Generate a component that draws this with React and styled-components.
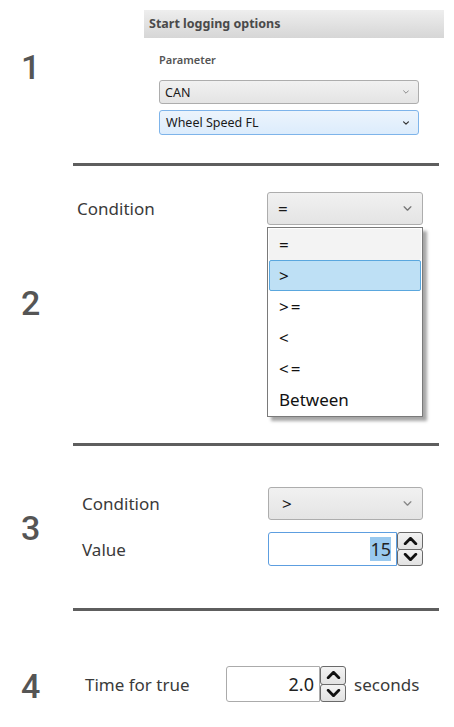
import React from 'react';
import styled, { createGlobalStyle } from 'styled-components';

const GlobalStyle = createGlobalStyle`
  body {
    margin: 0;
    background: #fff;
    font-family: 'Noto Sans', 'Open Sans', sans-serif;
    color: #333;
  }
`;

const Chevron = ({ dir = 'down', w = 8, h = 5, color = '#666', weight = 1.4 }) => (
	<svg width={w} height={h} viewBox="0 0 10 6">
		<polyline
			points={dir === 'down' ? '1,1 5,5 9,1' : '1,5 5,1 9,5'}
			fill="none"
			stroke={color}
			strokeWidth={weight}
			strokeLinecap="round"
			strokeLinejoin="round"
		/>
	</svg>
);

const Spinner = ({ h }) => (
	<SpinStack $h={h}>
		<SpinBtn><Chevron dir="up" w={15} h={8} color="#111" weight={2.1} /></SpinBtn>
		<SpinBtn><Chevron w={15} h={8} color="#111" weight={2.1} /></SpinBtn>
	</SpinStack>
);

const App = () => {
	const options = ['=', '>', '>=', '<', '<=', 'Between'];

	return (
		<Page>
			<GlobalStyle />

			<Section $h={163}>
				<Step $top={50}>1</Step>
				<Body $top={10}>
					<Header>Start logging options</Header>
					<ParamBlock>
						<SmallLabel>Parameter</SmallLabel>
						<Combo $w={260} $h={24} $pl={5} $pr={9} $fs={12.5}>
							CAN
							<Chevron w={6} h={4} color="#888" weight={1.6} />
						</Combo>
						<Combo $w={260} $h={25} $pl={6} $pr={9} $fs={12.5} $active>
							Wheel Speed FL
							<Chevron w={6} h={4} color="#333" weight={2} />
						</Combo>
					</ParamBlock>
				</Body>
			</Section>
			<Divider />

			<Section $h={277}>
				<Step $top={120}>2</Step>
				<Body $top={26}>
					<Field $indent={4}>
						<Label $w={190}>Condition</Label>
						<ComboWrap>
							<Combo $w={156} $h={33} $pl={10} $pr={10} $fs={17}>
								<Symbol>=</Symbol>
								<Chevron w={9} h={5} color="#777" weight={1.6} />
							</Combo>
							<Menu>
								{options.map((o, i) => (
									<Option key={o} $hl={i === 1} $current={i === 0}>
										{o.length < 3 ? <Symbol>{o}</Symbol> : o}
									</Option>
								))}
							</Menu>
						</ComboWrap>
					</Field>
				</Body>
			</Section>
			<Divider />

			<Section $h={162}>
				<Step $top={65}>3</Step>
				<Body $top={41}>
					<Fields>
						<Field $indent={9}>
							<Label $w={186}>Condition</Label>
							<Combo $w={155} $h={33} $pl={13} $pr={10} $fs={17}>
								<Symbol>&gt;</Symbol>
								<Chevron w={9} h={5} color="#888" weight={1.6} />
							</Combo>
						</Field>
						<Field $indent={9}>
							<Label $w={186}>Value</Label>
							<Spin>
								<NumBox $w={129} $h={34} $focus>
									<Selected>15</Selected>
								</NumBox>
								<Spinner h={34} />
							</Spin>
						</Field>
					</Fields>
				</Body>
			</Section>
			<Divider />

			<Section $h={116}>
				<Step $top={58}>4</Step>
				<Body $top={55}>
					<Field $indent={12}>
						<Label $w={141}>Time for true</Label>
						<Spin>
							<NumBox $w={94} $h={36}>2.0</NumBox>
							<Spinner h={36} />
							<Unit>seconds</Unit>
						</Spin>
					</Field>
				</Body>
			</Section>
		</Page>
	);
};

export default App;

const Page = styled.div`
width: 454px;
height: 727px;
overflow: hidden;
`;

const Section = styled.section`
display: flex;
height: ${p => p.$h}px;
`;

const Step = styled.div`
width: 73px;
flex-shrink: 0;
box-sizing: border-box;
padding-left: 21px;
padding-top: ${p => p.$top}px;
font: 500 34px/1 Roboto, 'Liberation Sans', Arial, sans-serif;
color: #555;
`;

const Body = styled.div`
flex: 1;
padding-top: ${p => p.$top}px;
`;

const Divider = styled.div`
margin-left: 73px;
width: 366px;
height: 3px;
background: #5e5e5e;
`;

const Header = styled.div`
margin-left: 71px;
width: 300px;
height: 28px;
box-sizing: border-box;
padding-left: 5px;
background: linear-gradient(#eeeeee, #d6d6d6);
font: 700 12.5px/28px 'Noto Sans', sans-serif;
color: #4a4a4a;
`;

const ParamBlock = styled.div`
margin-left: 86px;
margin-top: 14px;
display: flex;
flex-direction: column;
gap: 6px;
`;

const SmallLabel = styled.div`
font: 600 11px/16px 'Noto Sans', sans-serif;
color: #555;
margin-bottom: 6px;
`;

const Combo = styled.div`
display: flex;
align-items: center;
justify-content: space-between;
box-sizing: border-box;
width: ${p => p.$w}px;
height: ${p => p.$h}px;
padding: 0 ${p => p.$pr}px 0 ${p => p.$pl}px;
border: 1px solid ${p => (p.$active ? '#7eb4ea' : '#adadad')};
border-radius: 3px;
background: ${p => (p.$active ? 'linear-gradient(#ecf4fc, #dcecfc)' : 'linear-gradient(#f1f1f1, #e4e4e4)')};
font-size: ${p => p.$fs}px;
color: #1a1a1a;
`;

const ComboWrap = styled.div`
position: relative;
`;

const Menu = styled.ul`
position: absolute;
top: calc(100% + 2px);
left: 0;
width: 156px;
margin: 0;
padding: 1px;
list-style: none;
box-sizing: border-box;
background: #fff;
border: 1px solid #7a7a7a;
box-shadow: 4px 4px 3px rgba(0, 0, 0, 0.35);
`;

const Option = styled.li`
height: 31px;
display: flex;
align-items: center;
box-sizing: border-box;
padding-left: 9px;
font-size: 17px;
color: #111;
border: 1px solid ${p => (p.$hl ? '#5aa7de' : 'transparent')};
border-radius: 2px;
background: ${p => (p.$hl ? '#bee0f5' : p.$current ? '#f3f3f3' : 'transparent')};
`;

const Symbol = styled.span`
letter-spacing: 2px;
`;

const Fields = styled.div`
display: flex;
flex-direction: column;
gap: 12px;
`;

const Field = styled.div`
display: flex;
align-items: center;
padding-left: ${p => p.$indent}px;
`;

const Label = styled.div`
width: ${p => p.$w}px;
flex-shrink: 0;
font-size: 17px;
color: #3a3a3a;
`;

const Spin = styled.div`
display: flex;
align-items: center;
`;

const NumBox = styled.div`
display: flex;
align-items: center;
justify-content: flex-end;
box-sizing: border-box;
width: ${p => p.$w}px;
height: ${p => p.$h}px;
padding-right: 5px;
border: 1px solid ${p => (p.$focus ? '#5d9ee0' : '#ababab')};
border-radius: 3px 0 0 3px;
font-size: 18px;
color: #222;
`;

const Selected = styled.span`
background: #99c9ef;
`;

const SpinStack = styled.div`
display: flex;
flex-direction: column;
width: 26px;
height: ${p => p.$h}px;
`;

const SpinBtn = styled.div`
flex: 1;
display: flex;
align-items: center;
justify-content: center;
border: 1.5px solid #6a6a6a;
border-radius: 3px;
background: linear-gradient(#f3f3f3, #e2e2e2);
& + & {
	margin-top: -1px;
}
`;

const Unit = styled.span`
margin-left: 8px;
font-size: 17px;
color: #3a3a3a;
`;
